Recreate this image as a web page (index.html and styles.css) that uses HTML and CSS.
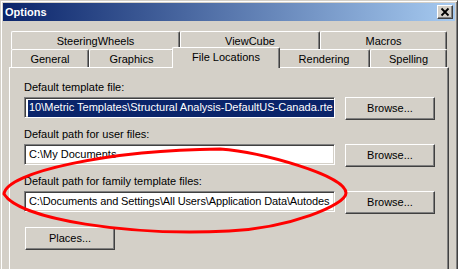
FILE: index.html
```html
<!DOCTYPE html>
<html>
<head>
<meta charset="utf-8">
<link rel="stylesheet" href="styles.css">
</head>
<body>
<div class="window">
  <div class="titlebar">
    <span class="title">Options</span>
    <div class="close">
      <svg width="14" height="12" viewBox="0 0 14 12"><path d="M3.5 2.5 L10.5 9.5 M10.5 2.5 L3.5 9.5" stroke="#000" stroke-width="1.8" fill="none"/></svg>
    </div>
  </div>
  <div class="tabs">
    <div class="tabrow">
      <div class="tab w-steer">SteeringWheels</div>
      <div class="tab w-cube">ViewCube</div>
      <div class="tab w-macros">Macros</div>
    </div>
    <div class="tabrow">
      <div class="tab w-general">General</div>
      <div class="tab w-graphics">Graphics</div>
      <div class="tab w-files selected">File Locations</div>
      <div class="tab w-render">Rendering</div>
      <div class="tab w-spell">Spelling</div>
    </div>
  </div>
  <div class="panel">
    <div class="group">
      <div class="label">Default template file:</div>
      <div class="row">
        <div class="field"><span class="sel">10\Metric Templates\Structural Analysis-DefaultUS-Canada.rte</span></div>
        <div class="btn">Browse...</div>
      </div>
    </div>
    <div class="group">
      <div class="label">Default path for user files:</div>
      <div class="row">
        <div class="field"><span class="txt">C:\My Documents</span></div>
        <div class="btn">Browse...</div>
      </div>
    </div>
    <div class="group">
      <div class="label">Default path for family template files:</div>
      <div class="row">
        <div class="field"><span class="txt tight">C:\Documents and Settings\All Users\Application Data\Autodes</span></div>
        <div class="btn">Browse...</div>
      </div>
    </div>
    <div class="btn places">Places...</div>
  </div>
</div>
<svg class="annot" width="458" height="269" viewBox="0 0 458 269">
  <path d="M4 194 C6 172 110 150 220 149 C260 152 346 175 346 193 C346 205 290 228 229 231 C130 236 20 220 4 194 Z" fill="none" stroke="#ff0000" stroke-width="3"/>
</svg>
</body>
</html>
```
FILE: styles.css
```css
html, body {
  margin: 0;
  padding: 0;
  background: #d4d0c8;
  overflow: hidden;
  width: 458px;
  height: 269px;
}
body {
  position: relative;
  font-family: "Liberation Sans", Arial, sans-serif;
  font-size: 11px;
  color: #000;
}
.window {
  box-sizing: border-box;
  width: 458px;
  height: 269px;
  border: 1px solid;
  border-bottom: 0;
  border-color: #d4d0c8 #404040 #404040 #d4d0c8;
  box-shadow: inset 1px 1px #ffffff, inset -1px 0 #808080;
  padding: 2px 2px 0 2px;
  background: #d4d0c8;
  display: flex;
  flex-direction: column;
}
.titlebar {
  height: 18px;
  flex: none;
  background: linear-gradient(to right, #0a246a, #a6caf0);
  display: flex;
  align-items: center;
  justify-content: space-between;
  padding: 0 2px 0 2px;
}
.title {
  color: #fff;
  font-weight: bold;
  font-size: 11px;
  line-height: 18px;
}
.close {
  box-sizing: border-box;
  width: 16px;
  height: 14px;
  background: #d4d0c8;
  border: 1px solid;
  border-color: #ffffff #404040 #404040 #ffffff;
  box-shadow: inset -1px -1px #808080;
  display: flex;
  align-items: center;
  justify-content: center;
}
.close svg { display: block; }
.tabs {
  margin: 10px 6px 0 8px;
  display: flex;
  flex-direction: column;
  flex: none;
}
.tabrow {
  display: flex;
  height: 18px;
  align-items: flex-start;
}
.tab {
  box-sizing: border-box;
  height: 18px;
  border-top: 1px solid #fff;
  border-left: 1px solid #fff;
  border-right: 1px solid #404040;
  box-shadow: inset -1px 0 #808080;
  border-radius: 2px 2px 0 0;
  text-align: center;
  line-height: 13px;
  padding-top: 3px;
  white-space: nowrap;
  background: #d4d0c8;
}
.w-steer { width: 169px; }
.w-cube { width: 140px; }
.w-macros { width: 127px; }
.w-general { width: 78px; }
.w-graphics { width: 85px; }
.w-files { width: 104px; }
.w-render { width: 92px; }
.w-spell { width: 77px; }
.tab.selected {
  position: relative;
  z-index: 2;
  height: 21px;
  margin: -2px -2px 0 -2px;
  width: 108px;
}
.panel {
  margin: 0 6px 0 6px;
  flex: 1;
  min-height: 0;
  border-top: 1px solid #fff;
  border-left: 1px solid #fff;
  border-right: 1px solid #404040;
  box-shadow: inset -1px 0 #808080;
  padding: 13px 0 0 14px;
  display: flex;
  flex-direction: column;
  align-items: flex-start;
  gap: 8px;
}
.group {
  display: flex;
  flex-direction: column;
  gap: 3px;
}
.label {
  line-height: 13px;
  white-space: nowrap;
}
.row {
  display: flex;
  gap: 10px;
  align-items: flex-start;
}
.field {
  box-sizing: border-box;
  width: 311px;
  height: 21px;
  background: #fff;
  border: 1px solid;
  border-color: #808080 #ffffff #ffffff #808080;
  box-shadow: inset 1px 1px #404040, inset -1px -1px #d4d0c8;
  padding: 2px 2px 0 3px;
  overflow: hidden;
  white-space: nowrap;
  display: flex;
}
.sel, .txt {
  line-height: 14px;
  flex: none;
  padding: 0 1px;
}
.tight {
  letter-spacing: -0.12px;
}
.sel {
  background: #0a246a;
  color: #fff;
}
.btn {
  box-sizing: border-box;
  width: 90px;
  height: 23px;
  border: 1px solid;
  border-color: #ffffff #404040 #404040 #ffffff;
  box-shadow: inset -1px -1px #808080;
  text-align: center;
  line-height: 20px;
  white-space: nowrap;
  flex: none;
}
.places {
  margin-top: 5px;
  margin-left: 1px;
}
.annot {
  position: absolute;
  left: 0;
  top: 0;
  pointer-events: none;
}
```
